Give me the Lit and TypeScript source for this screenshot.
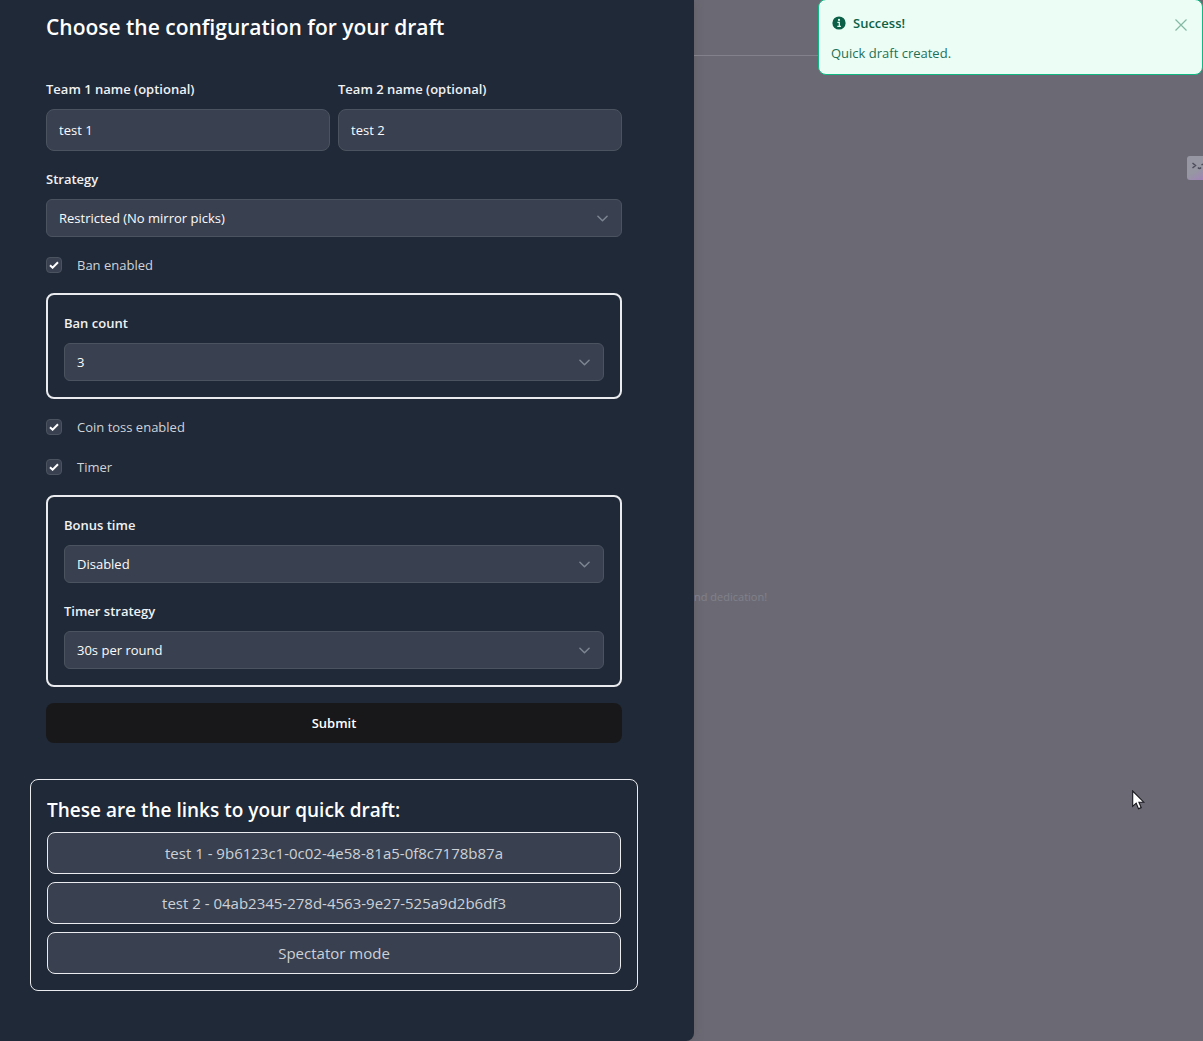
import { LitElement, html, css, svg } from "lit";
import { customElement, property } from "lit/decorators.js";

const chevron = svg`<path d="M1 1l5 5 5-5" fill="none" stroke="#7d8592" stroke-width="1.6" stroke-linecap="round" stroke-linejoin="round"/>`;

@customElement("select-field")
class SelectField extends LitElement {
  @property() label = "";
  @property({ type: Array }) options: string[] = [];

  static styles = css`
    :host { display: block; }
    .label { display: block; line-height: 24px; padding-bottom: 8px; font-size: 13px; font-weight: 600; color: #f0f1f3; }
    .wrap { display: grid; align-items: center; }
    .select, .chevron { grid-area: 1 / 1; }
    .select {
      appearance: none; box-sizing: border-box; width: 100%; height: 38px; margin: 0; padding: 0 36px 0 12px;
      border: 1px solid #4b5361; border-radius: 6px; background: #394150; color: #fbfbfc;
      font: 500 13px/20px "Open Sans", sans-serif;
    }
    .chevron { justify-self: end; margin-right: 14px; width: 11px; height: 7px; pointer-events: none; }
  `;

  render() {
    return html`
      <label class="label" for="control">${this.label}</label>
      <div class="wrap">
        <select class="select" id="control">${this.options.map((o) => html`<option>${o}</option>`)}</select>
        <svg class="chevron" viewBox="0 0 12 7" aria-hidden="true">${chevron}</svg>
      </div>
    `;
  }
}

@customElement("check-field")
class CheckField extends LitElement {
  @property() label = "";

  static styles = css`
    :host { display: block; }
    .row { display: flex; align-items: center; gap: 15px; height: 24px; font-size: 13px; color: #cfd3d9; }
    .box { display: grid; place-items: center; }
    .input, .tick { grid-area: 1 / 1; }
    .input {
      appearance: none; box-sizing: border-box; width: 16px; height: 16px; margin: 0;
      border: 1px solid #4b5361; border-radius: 4px; background: #394150;
    }
    .tick { width: 10px; height: 8px; pointer-events: none; visibility: hidden; }
    .input:checked + .tick { visibility: visible; }
  `;

  render() {
    return html`
      <label class="row">
        <span class="box">
          <input class="input" type="checkbox" checked />
          <svg class="tick" viewBox="0 0 10 8" aria-hidden="true">
            <path d="M1 4.2l2.6 2.5L9 1.2" fill="none" stroke="#fff" stroke-width="2" />
          </svg>
        </span>
        <span>${this.label}</span>
      </label>
    `;
  }
}

@customElement("app-root")
class AppRoot extends LitElement {
  static styles = css`
    :host {
      display: block; position: relative; overflow: hidden; background: #6b6a74;
      font-family: "Open Sans", "Noto Sans", sans-serif; font-size: 13px;
    }
    .layout { display: grid; grid-template-columns: 15fr 11fr; min-height: 100vh; }
    .panel {
      box-sizing: border-box; padding: 11px 56px 50px 30px; background: #202937;
      border-bottom-right-radius: 8px; box-shadow: 0 0 8px rgba(90, 80, 90, 0.5);
    }
    .title { margin: 0 16px 34px; font-size: 21px; line-height: 32px; font-weight: 600; color: #fff; }
    .form { display: flex; flex-direction: column; gap: 16px; padding: 0 16px; }
    .teams { display: grid; grid-template-columns: 1fr 1fr; gap: 8px; }
    .label { display: block; line-height: 24px; padding-bottom: 8px; font-weight: 600; color: #f0f1f3; }
    .text {
      box-sizing: border-box; display: block; width: 100%; height: 42px; margin: 0; padding: 0 12px;
      border: 1px solid #4b5361; border-radius: 8px; background: #394150; color: #fbfbfc;
      font: 500 13px/20px "Open Sans", sans-serif;
    }
    .group { display: flex; flex-direction: column; gap: 16px; padding: 16px; border: 2px solid #e9ebee; border-radius: 8px; }
    .submit {
      height: 40px; border: 0; border-radius: 8px; background: #18181a; color: #fff;
      font: 600 13px/20px "Open Sans", sans-serif;
    }
    .links { display: flex; flex-direction: column; gap: 8px; margin-top: 36px; padding: 16px; border: 1px solid #e9ebee; border-radius: 8px; }
    .links-title { margin: 0; font-size: 19px; line-height: 28px; font-weight: 600; color: #fff; }
    .link {
      box-sizing: border-box; height: 42px; border: 1px solid #e9ebee; border-radius: 8px; background: #394150;
      color: #cdd1d7; font-size: 15px; line-height: 40px; text-align: center; text-decoration: none;
    }
    .backdrop { display: flex; flex-direction: column; overflow: hidden; }
    .bar { box-sizing: border-box; height: 56px; border-bottom: 1px solid #83828c; }
    .handle {
      align-self: flex-end; width: 16px; height: 24px; margin-top: 100px; border-radius: 3px 0 0 3px;
      background: linear-gradient(150deg, #9697a2 60%, #a184b8);
    }
    .face { display: block; width: 16px; height: 24px; }
    .footnote { margin: 408px 0 0; font-size: 11px; line-height: 18px; color: #81818b; }
    .toast {
      position: absolute; top: -1px; right: 0; box-sizing: border-box; width: 385px; max-width: 100%;
      padding: 13px 12px 11px; border: 1px solid #10b981; border-radius: 8px;
      background: #ebfdf5; color: #1f7056;
    }
    .toast-head { display: flex; align-items: center; gap: 7px; line-height: 20px; font-weight: 600; color: #0b6047; }
    .info { width: 14px; height: 14px; margin-left: 1px; }
    .toast-text { margin: 10px 0 0; line-height: 20px; }
    .close { position: absolute; top: 17px; right: 13px; width: 16px; height: 16px; padding: 0; border: 0; background: none; }
    .cross { display: block; width: 16px; height: 16px; }
    .pointer { position: absolute; left: 1132px; top: 790px; width: 13px; height: 20px; }
  `;

  render() {
    return html`
      <div class="layout">
        <main class="panel">
          <h1 class="title">Choose the configuration for your draft</h1>
          <form class="form" @submit=${(e: Event) => e.preventDefault()}>
            <div class="teams">
              <div>
                <label class="label" for="team1">Team 1 name (optional)</label>
                <input class="text" id="team1" type="text" value="test 1" />
              </div>
              <div>
                <label class="label" for="team2">Team 2 name (optional)</label>
                <input class="text" id="team2" type="text" value="test 2" />
              </div>
            </div>
            <select-field label="Strategy" .options=${["Restricted (No mirror picks)"]}></select-field>
            <check-field label="Ban enabled"></check-field>
            <div class="group">
              <select-field label="Ban count" .options=${["3"]}></select-field>
            </div>
            <check-field label="Coin toss enabled"></check-field>
            <check-field label="Timer"></check-field>
            <div class="group">
              <select-field label="Bonus time" .options=${["Disabled"]}></select-field>
              <select-field label="Timer strategy" .options=${["30s per round"]}></select-field>
            </div>
            <button class="submit" type="submit">Submit</button>
          </form>
          <section class="links">
            <h2 class="links-title">These are the links to your quick draft:</h2>
            <a class="link" href="#team1">test 1 - 9b6123c1-0c02-4e58-81a5-0f8c7178b87a</a>
            <a class="link" href="#team2">test 2 - 04ab2345-278d-4563-9e27-525a9d2b6df3</a>
            <a class="link" href="#spectator">Spectator mode</a>
          </section>
        </main>
        <div class="backdrop">
          <div class="bar"></div>
          <div class="handle">
            <svg class="face" viewBox="0 0 16 24" aria-hidden="true">
              <path d="M5.5 7l3 2.5-3 2.5M11 11.500q1.500 2 3 0M14.500 9l1.500-1" fill="none" stroke="#4d4c5c" stroke-width="1.500" />
            </svg>
          </div>
          <p class="footnote">nd dedication!</p>
        </div>
      </div>
      <div class="toast" role="status">
        <div class="toast-head">
          <svg class="info" viewBox="0 0 14 14" aria-hidden="true">
            <circle cx="7" cy="7" r="6.600" fill="#0b6047" />
            <circle cx="7" cy="3.900" r="1.100" fill="#ebfdf5" />
            <path d="M5.400 6.300h1.900v3.900M5.300 10.300h3.600" fill="none" stroke="#ebfdf5" stroke-width="1.200" />
          </svg>
          <span>Success!</span>
        </div>
        <p class="toast-text">Quick draft created.</p>
        <button class="close" type="button" aria-label="Close">
          <svg class="cross" viewBox="0 0 16 16"><path d="M2.500 2.500l11 11M13.500 2.500l-11 11" stroke="#85b9a4" stroke-width="1.200" /></svg>
        </button>
      </div>
      <svg class="pointer" viewBox="0 0 13 20" aria-hidden="true">
        <path d="M.7 1v15.300l3.500-3.200 2.300 5.600 2.700-1.100-2.300-5.400h4.900z" fill="#fff" stroke="#15151c" stroke-width="1.100" />
      </svg>
    `;
  }
}
